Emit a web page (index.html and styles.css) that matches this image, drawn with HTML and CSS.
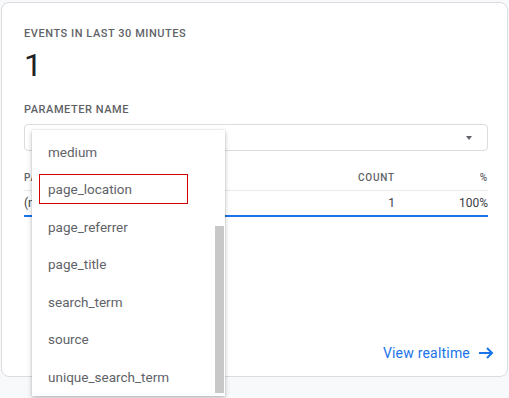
FILE: index.html
```html
<!DOCTYPE html>
<html lang="en">
  <head>
    <meta charset="UTF-8" />
    <meta name="viewport" content="width=device-width, initial-scale=1.0" />
    <title>Realtime events</title>
    <link rel="stylesheet" href="styles.css">
  </head>

  <body>
    <div class="card">
      <div class="label">Events in last 30 minutes</div>
      <div class="big-number">1</div>

      <div class="label param-label">Parameter name</div>
      <div class="select">
        <span class="select-arrow"></span>
      </div>

      <div class="table">
        <div class="table-row table-head">
          <div class="col-name">Parameter value</div>
          <div class="col-count">Count</div>
          <div class="col-pct">%</div>
        </div>
        <div class="table-row table-body">
          <div class="col-name">(not set)</div>
          <div class="col-count">1</div>
          <div class="col-pct">100%</div>
        </div>
      </div>

      <div class="footer">
        <a class="view-link" href="#">
          View realtime
          <svg class="arrow" width="15" height="12" viewBox="0 0 15 12">
            <path d="M0 6H13M8 1L13 6L8 11" fill="none" stroke="#1a73e8" stroke-width="2" />
          </svg>
        </a>
      </div>
    </div>

    <div class="menu">
      <div class="menu-item">medium</div>
      <div class="menu-item active"><span class="focus-box">page_location</span></div>
      <div class="menu-item">page_referrer</div>
      <div class="menu-item">page_title</div>
      <div class="menu-item">search_term</div>
      <div class="menu-item">source</div>
      <div class="menu-item">unique_search_term</div>
      <div class="scroll-thumb"></div>
    </div>
  </body>
</html>
```

FILE: styles.css
```css
body {
  margin: 0;
  padding: 2px 0 0 1px;
  font-family: Roboto, Arial, sans-serif;
  background-color: #f8f9fa;
  height: 396px;
  overflow: hidden;
}

.card {
  box-sizing: border-box;
  width: 507px;
  height: 375px;
  padding: 23px 19px 13px 22px;
  border: 1px solid #dadce0;
  border-radius: 8px;
  background-color: #fff;
  display: flex;
  flex-direction: column;
}

.label {
  font-size: 11px;
  line-height: 16px;
  font-weight: 500;
  letter-spacing: 0.55px;
  text-transform: uppercase;
  color: #5f6368;
}

.big-number {
  margin-top: 3px;
  font-size: 32px;
  line-height: 40px;
  color: #202124;
}

.param-label {
  margin-top: 17px;
}

.select {
  box-sizing: border-box;
  position: relative;
  margin-top: 6px;
  height: 27px;
  border: 1px solid #dadce0;
  border-radius: 4px;
}

.select-arrow {
  position: absolute;
  right: 15px;
  top: 11px;
  border-left: 3.5px solid transparent;
  border-right: 3.5px solid transparent;
  border-top: 4px solid #5f6368;
}

.table {
  margin-top: 14px;
}

.table-row {
  display: flex;
  align-items: center;
}

.table-head {
  height: 25px;
  border-bottom: 1px solid #e8eaed;
  font-size: 10px;
  font-weight: 500;
  letter-spacing: 0.8px;
  text-transform: uppercase;
  color: #5f6368;
}

.table-body {
  height: 24px;
  border-bottom: 2px solid #1a73e8;
  font-size: 12px;
  color: #3c4043;
}

.col-name {
  flex: 1;
}

.col-count {
  width: 80px;
  text-align: right;
}

.col-pct {
  width: 93px;
  text-align: right;
}

.footer {
  margin-top: auto;
  margin-right: -6px;
  display: flex;
  justify-content: flex-end;
}

.view-link {
  display: flex;
  align-items: center;
  gap: 9px;
  font-size: 14px;
  line-height: 20px;
  letter-spacing: 0.2px;
  color: #1a73e8;
  text-decoration: none;
}

.menu {
  position: absolute;
  left: 32px;
  top: 130px;
  width: 193px;
  height: 266px;
  padding-top: 3px;
  box-sizing: border-box;
  background-color: #fff;
  box-shadow: 0 2px 5px rgba(0, 0, 0, 0.25), 0 0 1px rgba(0, 0, 0, 0.2);
  overflow: hidden;
}

.menu-item {
  height: 37.5px;
  display: flex;
  align-items: center;
  padding-left: 16px;
  font-size: 13.5px;
  color: #5f6368;
}

.menu-item.active {
  padding-left: 7px;
}

.focus-box {
  box-sizing: border-box;
  width: 149px;
  height: 30px;
  padding-left: 8px;
  display: flex;
  align-items: center;
  border: 1px solid #d40000;
}

.scroll-thumb {
  position: absolute;
  right: 1px;
  top: 96px;
  width: 9px;
  height: 167px;
  background-color: #c8c8c8;
}
```
